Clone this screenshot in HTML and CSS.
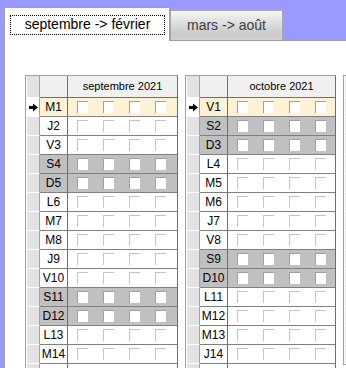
FILE: index.html
```html
<!DOCTYPE html>
<html lang="fr">
  <head>
    <meta charset="UTF-8" />
    <title>Calendrier</title>
    <link rel="stylesheet" href="styles.css">
  </head>
  <body>
    <div class="tabs">
      <div class="tab tab-active"><span class="focus">septembre -&gt; février</span></div>
      <div class="tab">mars -&gt; août</div>
    </div>

    <div class="panel">
      <!-- septembre -->
      <div class="cal">
        <div class="row head"><div class="sel"></div><div class="day"></div><div class="title">septembre 2021</div></div>
        <div class="row cur"><div class="sel"><svg width="9" height="9" viewBox="0 0 9 9"><path d="M0 3h4V0.5L9 4.5 4 8.5V6H0z" fill="#000"/></svg></div><div class="day">M1</div><div class="checks"><span class="cb"></span><span class="cb"></span><span class="cb"></span><span class="cb"></span></div></div>
        <div class="row"><div class="sel"></div><div class="day">J2</div><div class="checks"><span class="cb"></span><span class="cb"></span><span class="cb"></span><span class="cb"></span></div></div>
        <div class="row"><div class="sel"></div><div class="day">V3</div><div class="checks"><span class="cb"></span><span class="cb"></span><span class="cb"></span><span class="cb"></span></div></div>
        <div class="row we"><div class="sel"></div><div class="day">S4</div><div class="checks"><span class="cb"></span><span class="cb"></span><span class="cb"></span><span class="cb"></span></div></div>
        <div class="row we"><div class="sel"></div><div class="day">D5</div><div class="checks"><span class="cb"></span><span class="cb"></span><span class="cb"></span><span class="cb"></span></div></div>
        <div class="row"><div class="sel"></div><div class="day">L6</div><div class="checks"><span class="cb"></span><span class="cb"></span><span class="cb"></span><span class="cb"></span></div></div>
        <div class="row"><div class="sel"></div><div class="day">M7</div><div class="checks"><span class="cb"></span><span class="cb"></span><span class="cb"></span><span class="cb"></span></div></div>
        <div class="row"><div class="sel"></div><div class="day">M8</div><div class="checks"><span class="cb"></span><span class="cb"></span><span class="cb"></span><span class="cb"></span></div></div>
        <div class="row"><div class="sel"></div><div class="day">J9</div><div class="checks"><span class="cb"></span><span class="cb"></span><span class="cb"></span><span class="cb"></span></div></div>
        <div class="row"><div class="sel"></div><div class="day">V10</div><div class="checks"><span class="cb"></span><span class="cb"></span><span class="cb"></span><span class="cb"></span></div></div>
        <div class="row we"><div class="sel"></div><div class="day">S11</div><div class="checks"><span class="cb"></span><span class="cb"></span><span class="cb"></span><span class="cb"></span></div></div>
        <div class="row we"><div class="sel"></div><div class="day">D12</div><div class="checks"><span class="cb"></span><span class="cb"></span><span class="cb"></span><span class="cb"></span></div></div>
        <div class="row"><div class="sel"></div><div class="day">L13</div><div class="checks"><span class="cb"></span><span class="cb"></span><span class="cb"></span><span class="cb"></span></div></div>
        <div class="row"><div class="sel"></div><div class="day">M14</div><div class="checks"><span class="cb"></span><span class="cb"></span><span class="cb"></span><span class="cb"></span></div></div>
        <div class="row"><div class="sel"></div><div class="day"></div><div class="checks"></div></div>
      </div>

      <!-- octobre -->
      <div class="cal">
        <div class="row head"><div class="sel"></div><div class="day"></div><div class="title">octobre 2021</div></div>
        <div class="row cur"><div class="sel"><svg width="9" height="9" viewBox="0 0 9 9"><path d="M0 3h4V0.5L9 4.5 4 8.5V6H0z" fill="#000"/></svg></div><div class="day">V1</div><div class="checks"><span class="cb"></span><span class="cb"></span><span class="cb"></span><span class="cb"></span></div></div>
        <div class="row we"><div class="sel"></div><div class="day">S2</div><div class="checks"><span class="cb"></span><span class="cb"></span><span class="cb"></span><span class="cb"></span></div></div>
        <div class="row we"><div class="sel"></div><div class="day">D3</div><div class="checks"><span class="cb"></span><span class="cb"></span><span class="cb"></span><span class="cb"></span></div></div>
        <div class="row"><div class="sel"></div><div class="day">L4</div><div class="checks"><span class="cb"></span><span class="cb"></span><span class="cb"></span><span class="cb"></span></div></div>
        <div class="row"><div class="sel"></div><div class="day">M5</div><div class="checks"><span class="cb"></span><span class="cb"></span><span class="cb"></span><span class="cb"></span></div></div>
        <div class="row"><div class="sel"></div><div class="day">M6</div><div class="checks"><span class="cb"></span><span class="cb"></span><span class="cb"></span><span class="cb"></span></div></div>
        <div class="row"><div class="sel"></div><div class="day">J7</div><div class="checks"><span class="cb"></span><span class="cb"></span><span class="cb"></span><span class="cb"></span></div></div>
        <div class="row"><div class="sel"></div><div class="day">V8</div><div class="checks"><span class="cb"></span><span class="cb"></span><span class="cb"></span><span class="cb"></span></div></div>
        <div class="row we"><div class="sel"></div><div class="day">S9</div><div class="checks"><span class="cb"></span><span class="cb"></span><span class="cb"></span><span class="cb"></span></div></div>
        <div class="row we"><div class="sel"></div><div class="day">D10</div><div class="checks"><span class="cb"></span><span class="cb"></span><span class="cb"></span><span class="cb"></span></div></div>
        <div class="row"><div class="sel"></div><div class="day">L11</div><div class="checks"><span class="cb"></span><span class="cb"></span><span class="cb"></span><span class="cb"></span></div></div>
        <div class="row"><div class="sel"></div><div class="day">M12</div><div class="checks"><span class="cb"></span><span class="cb"></span><span class="cb"></span><span class="cb"></span></div></div>
        <div class="row"><div class="sel"></div><div class="day">M13</div><div class="checks"><span class="cb"></span><span class="cb"></span><span class="cb"></span><span class="cb"></span></div></div>
        <div class="row"><div class="sel"></div><div class="day">J14</div><div class="checks"><span class="cb"></span><span class="cb"></span><span class="cb"></span><span class="cb"></span></div></div>
        <div class="row"><div class="sel"></div><div class="day"></div><div class="checks"></div></div>
      </div>

      <!-- novembre: only its left edge is in view -->
      <div class="cal">
        <div class="row head"><div class="sel"></div><div class="day"></div><div class="title"></div></div>
        <div class="row"><div class="sel"></div><div class="day"></div><div class="checks"></div></div>
        <div class="row"><div class="sel"></div><div class="day"></div><div class="checks"></div></div>
        <div class="row"><div class="sel"></div><div class="day"></div><div class="checks"></div></div>
        <div class="row"><div class="sel"></div><div class="day"></div><div class="checks"></div></div>
        <div class="row"><div class="sel"></div><div class="day"></div><div class="checks"></div></div>
        <div class="row"><div class="sel"></div><div class="day"></div><div class="checks"></div></div>
        <div class="row"><div class="sel"></div><div class="day"></div><div class="checks"></div></div>
        <div class="row"><div class="sel"></div><div class="day"></div><div class="checks"></div></div>
        <div class="row"><div class="sel"></div><div class="day"></div><div class="checks"></div></div>
        <div class="row"><div class="sel"></div><div class="day"></div><div class="checks"></div></div>
        <div class="row"><div class="sel"></div><div class="day"></div><div class="checks"></div></div>
        <div class="row"><div class="sel"></div><div class="day"></div><div class="checks"></div></div>
        <div class="row"><div class="sel"></div><div class="day"></div><div class="checks"></div></div>
        <div class="row"><div class="sel"></div><div class="day"></div><div class="checks"></div></div>
      </div>
    </div>
  </body>
</html>
```

FILE: styles.css
```css
html,
body {
  margin: 0;
  overflow: hidden;
}

body {
  background-color: #9999ff;
  font-family: "Liberation Sans", Arial, sans-serif;
  color: #000;
  height: 368px;
}

/* Tabs */
.tabs {
  display: flex;
  align-items: flex-end;
  height: 33px;
  padding: 7px 0 0 4px;
}

.tab {
  box-sizing: border-box;
  width: 113px;
  height: 30px;
  padding-top: 6px;
  border: 1px solid #a8a8a8;
  border-bottom: none;
  background: linear-gradient(#f6f6f6, #e2e2e2 35%, #c9c9c9 80%, #d2d2d2);
  color: #404040;
  font-size: 14px;
  text-align: center;
}

.tab-active {
  position: relative; /* sits over the panel's top border */
  width: 166px;
  height: 34px;
  margin-bottom: -1px;
  padding: 7px 0 0 5px;
  border-color: #a0a0a0;
  background: #fff;
  color: #000;
  text-align: left;
}

.focus {
  display: block;
  box-sizing: border-box;
  width: 155px;
  height: 20px;
  border: 1px dotted #000;
  line-height: 17px;
  text-align: center;
}

/* Panel */
.panel {
  box-sizing: border-box;
  display: flex;
  gap: 7px;
  height: 328px;
  margin-left: 4px;
  padding: 34px 0 0 20px;
  background: #fff;
  border-top: 1px solid #a0a0a0;
  border-left: 1px solid #a0a0a0;
}

/* Month grid */
.cal {
  flex: none;
  box-sizing: border-box;
  width: 151px;
  align-self: flex-start;
  border: 1px solid #a0a0a0;
  border-right-color: #6e6e6e;
}

.cal:first-child {
  width: 153px;
}

.row {
  display: grid;
  grid-template-columns: 14px 28px 1fr;
  height: 19px;
}

.row > div {
  box-sizing: border-box;
  border-bottom: 1px solid #808080;
}

.row > .sel {
  display: flex;
  align-items: center;
  justify-content: center;
  background: #e3e3e3;
  border-left: 1px solid #fff;
  border-right: 1px solid #a0a0a0;
  border-bottom: 1px solid #fff;
}

.day {
  border-right: 1px solid #6e6e6e;
  font-size: 12px;
  line-height: 18px;
  text-align: center;
}

.checks {
  display: flex;
  align-items: center;
  gap: 15px;
  padding-left: 9px;
}

.cb {
  box-sizing: border-box;
  width: 11px;
  height: 12px;
  background: #fff;
  border-top: 1px solid #c4c4c4;
  border-left: 1px solid #c4c4c4;
}

.head {
  height: 22px;
}

.head > .day,
.head > .title {
  background: #f0f0f0;
  border-bottom-color: #6e6e6e;
}

.title {
  font-size: 11px;
  line-height: 21px;
  text-align: center;
}

.cur > .sel {
  background: #fff;
}

.cur > .day,
.cur > .checks {
  background: #fdf1d6;
}

.we > .day,
.we > .checks {
  background: #c0c0c0;
}

.cur .cb,
.we .cb {
  border-color: #a0a0a0;
}
```
